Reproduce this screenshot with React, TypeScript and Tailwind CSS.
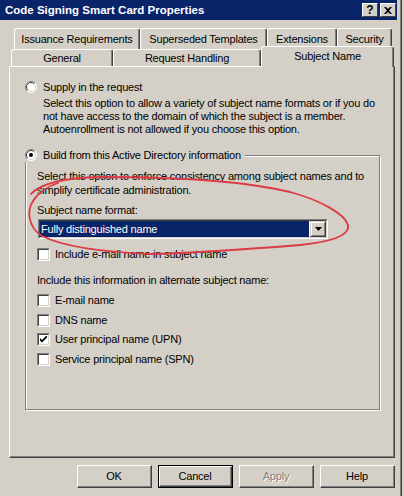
import React from "react";

const Radio = ({ checked }: { checked?: boolean }) => (
  <svg width="12" height="12" viewBox="0 0 12 12" className="shrink-0">
    <circle cx="6" cy="6" r="5.5" fill="#ffffff" />
    <path d="M9.9 2.1 A5.5 5.5 0 0 0 2.1 9.9" fill="none" stroke="#808080" strokeWidth="1" />
    <path d="M9.2 2.8 A4.5 4.5 0 0 0 2.8 9.2" fill="none" stroke="#404040" strokeWidth="1" />
    <path d="M2.1 9.9 A5.5 5.5 0 0 0 9.9 2.1" fill="none" stroke="#ffffff" strokeWidth="1" />
    <path d="M2.8 9.2 A4.5 4.5 0 0 0 9.2 2.8" fill="none" stroke="#d4d0c8" strokeWidth="1" />
    {checked && <circle cx="6" cy="6" r="2" fill="#000000" />}
  </svg>
);

const Check = ({ checked }: { checked?: boolean }) => (
  <div className="w-[13px] h-[13px] shrink-0 border-t border-l border-[#808080] border-b border-r border-b-white border-r-white">
    <div className="w-full h-full border-t border-l border-[#404040] border-b border-r border-b-[#d4d0c8] border-r-[#d4d0c8] bg-white flex items-center justify-center">
      {checked && (
        <svg width="7" height="7" viewBox="0 0 7 7">
          <path d="M0 2 L0 4.5 L2 6.5 L7 1.5 L7 -1 L2 4 Z" fill="#000" />
        </svg>
      )}
    </div>
  </div>
);

const Btn = ({ label, isDefault, disabled }: { label: string; isDefault?: boolean; disabled?: boolean }) => (
  <div className={`w-[75px] h-[23px] ${isDefault ? "border border-black" : ""}`}>
    <div className="w-full h-full border-t border-l border-white border-r border-b border-r-[#404040] border-b-[#404040]">
      <div className="w-full h-full border-r border-b border-[#808080] flex items-center justify-center">
        <span
          className={disabled ? "text-[#808080] [text-shadow:1px_1px_0_#ffffff]" : "text-black"}
        >
          {label}
        </span>
      </div>
    </div>
  </div>
);

const BackTab = ({ label, w }: { label: string; w: string }) => (
  <div className={`${w} h-[21px] rounded-t-[3px] border-t border-l border-white border-r border-r-[#404040] shadow-[inset_-1px_0_0_#808080] flex items-start justify-center pt-[4px]`}>
    {label}
  </div>
);

const FrontTab = ({ label, w }: { label: string; w: string }) => (
  <div className={`${w} h-[17px] rounded-t-[3px] border-t border-l border-white border-r border-r-[#404040] shadow-[inset_-1px_0_0_#808080] flex items-start justify-center pt-[2px]`}>
    {label}
  </div>
);

export default function App() {
  return (
    <div className="w-[404px] h-[496px] bg-[#d4d0c8] overflow-hidden relative flex font-['Liberation_Sans',Arial,sans-serif] text-[11px] tracking-[-0.2px] text-black leading-[13px]">
      <div className="w-[1px] bg-[#d4d0c8]" />
      <div className="w-[397px] flex flex-col -ml-px">
        {/* Title bar */}
        <div className="h-[20px] bg-[#0a246a] flex items-center justify-between pl-[5px] pr-px">
          <span className="text-white font-bold text-[11.5px] tracking-normal leading-[13px] pt-px">Code Signing Smart Card Properties</span>
          <div className="flex gap-[2px] items-center">
            <div className="w-[16px] h-[14px] bg-[#d4d0c8] border-t border-l border-white border-r border-b border-r-[#404040] border-b-[#404040] flex items-center justify-center">
              <span className="font-bold text-[12px] leading-[12px] -mt-px tracking-normal">?</span>
            </div>
            <div className="w-[16px] h-[14px] bg-[#d4d0c8] border-t border-l border-white border-r border-b border-r-[#404040] border-b-[#404040] flex items-center justify-center">
              <svg width="8" height="7" viewBox="0 0 8 7">
                <path d="M0 0 L2 0 L4 2 L6 0 L8 0 L5 3.5 L8 7 L6 7 L4 5 L2 7 L0 7 L3 3.5 Z" fill="#000" />
              </svg>
            </div>
          </div>
        </div>

        {/* Tabs back row */}
        <div className="mt-[8px] pl-[14px] flex">
          <BackTab label="Issuance Requirements" w="w-[126px]" />
          <BackTab label="Superseded Templates" w="w-[127px]" />
          <BackTab label="Extensions" w="w-[70px]" />
          <BackTab label="Security" w="w-[55px]" />
        </div>
        {/* Tabs front row */}
        <div className="pl-[11px] flex items-end h-[17px]">
          <FrontTab label="General" w="w-[102px]" />
          <FrontTab label="Request Handling" w="w-[148px]" />
          <div className="relative z-10 w-[133px] h-[21px] -mb-px bg-[#d4d0c8] rounded-t-[3px] border-t border-l border-white border-r border-r-[#404040] shadow-[inset_-1px_0_0_#808080] flex items-start justify-center pt-[3px]">
            Subject Name
          </div>
        </div>

        {/* Panel */}
        <div className="ml-[9px] w-[386px] h-[392px] border-t border-l border-white border-r border-b border-r-[#404040] border-b-[#404040] shadow-[inset_-1px_-1px_0_#808080] flex flex-col">
          <div className="mt-[13px] pl-[15px] flex items-center gap-[6px] h-[14px]">
            <Radio />
            <span>Supply in the request</span>
          </div>
          <div className="mt-[3px] pl-[33px] leading-[13px]">
            <div>Select this option to allow a variety of subject name formats or if you do</div>
            <div>not have access to the domain of which the subject is a member.</div>
            <div>Autoenrollment is not allowed if you choose this option.</div>
          </div>

          {/* Group box */}
          <div className="mt-[19px] ml-[15px] w-[355px] h-[255px] border border-[#808080] shadow-[1px_1px_0_#ffffff,inset_1px_1px_0_#ffffff] flex flex-col">
            <div className="-mt-[8px] -ml-px h-[14px] w-fit bg-[#d4d0c8] flex items-center gap-[6px] pr-[4px]">
              <Radio checked />
              <span>Build from this Active Directory information</span>
            </div>
            <div className="mt-[7px] pl-[11px] leading-[14px]">
              <div>Select this option to enforce consistency among subject names and to</div>
              <div>simplify certificate administration.</div>
            </div>
            <div className="mt-[7px] pl-[11px] h-[13px] leading-[13px]">Subject name format:</div>
            {/* Combo */}
            <div className="mt-[2px] ml-[12px] w-[290px] h-[20px] border-t border-l border-[#808080] border-r border-b border-r-white border-b-white">
              <div className="w-full h-full border-t border-l border-[#404040] border-r border-b border-r-[#d4d0c8] border-b-[#d4d0c8] bg-white flex">
                <div className="flex-1 bg-[#0a246a] text-white flex items-center pl-[1px] mr-px">
                  Fully distinguished name
                </div>
                <div className="w-[16px] h-full bg-[#d4d0c8] border-t border-l border-[#d4d0c8] border-r border-b border-r-[#404040] border-b-[#404040]">
                  <div className="w-full h-full border-t border-l border-white border-r border-b border-r-[#808080] border-b-[#808080] flex items-center justify-center">
                    <svg width="7" height="4" viewBox="0 0 7 4">
                      <path d="M0 0 L7 0 L3.5 4 Z" fill="#000" />
                    </svg>
                  </div>
                </div>
              </div>
            </div>
            <div className="mt-[9px] ml-[11px] flex items-center gap-[5px] h-[13px]">
              <Check />
              <span>Include e-mail name in subject name</span>
            </div>
            <div className="mt-[13px] pl-[11px] h-[13px] leading-[13px]">Include this information in alternate subject name:</div>
            <div className="mt-[7px] ml-[11px] flex flex-col gap-[6.5px]">
              <div className="flex items-center gap-[5px] h-[13px]">
                <Check />
                <span>E-mail name</span>
              </div>
              <div className="flex items-center gap-[5px] h-[13px]">
                <Check />
                <span>DNS name</span>
              </div>
              <div className="flex items-center gap-[5px] h-[13px]">
                <Check checked />
                <span>User principal name (UPN)</span>
              </div>
              <div className="flex items-center gap-[5px] h-[13px]">
                <Check />
                <span>Service principal name (SPN)</span>
              </div>
            </div>
          </div>
        </div>

        {/* Buttons */}
        <div className="mt-[7px] pl-[77px] flex gap-[6px]">
          <Btn label="OK" />
          <Btn label="Cancel" isDefault />
          <Btn label="Apply" disabled />
          <Btn label="Help" />
        </div>
      </div>
      {/* right window frame */}
      <div className="flex-1 flex">
        <div className="w-[3px]" />
        <div className="w-px bg-[#808080]" />
        <div className="w-px bg-[#404040]" />
      </div>

      {/* Red annotation */}
      <svg className="absolute inset-0 pointer-events-none" width="404" height="496" viewBox="0 0 404 496">
        <path
          d="M31 194 C40 184, 60 178, 100 177 C160 177, 240 180, 290 192 C320 200, 345 214, 348 225 C350 236, 330 242, 300 245 C250 249, 200 253, 150 254 C100 252, 62 246, 42 236 C29 228, 26 212, 33 201 C38 193, 48 186, 58 183"
          fill="none"
          stroke="#dc3a44"
          strokeWidth="1.8"
          strokeLinecap="round"
          strokeLinejoin="round"
        />
      </svg>
    </div>
  );
}
